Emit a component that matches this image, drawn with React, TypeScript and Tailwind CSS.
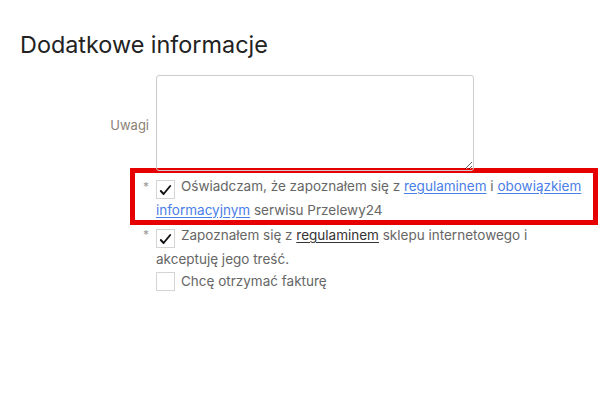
import React from "react";

function Check() {
  return (
    <svg width="13" height="12" viewBox="0 0 13 12" className="block mt-[2px]">
      <path d="M1.8 7 L4.6 10 L11.2 2" fill="none" stroke="#111" strokeWidth="1.9" strokeLinecap="round" strokeLinejoin="round" />
    </svg>
  );
}

function Box({ checked }: { checked?: boolean }) {
  return (
    <span className="inline-flex items-center justify-center w-[19px] h-[19px] border border-[#d4d4d4] bg-white align-[-5px] mr-[6px]">
      {checked ? <Check /> : null}
    </span>
  );
}

export default function App() {
  return (
    <div className="w-[609px] h-[396px] bg-white overflow-hidden" style={{ fontFamily: "Inter, 'Noto Sans', sans-serif" }}>
      <h1 className="pl-[20px] pt-[29px] text-[23.4px] leading-[32px] text-[#222] font-normal">Dodatkowe informacje</h1>
      <div className="flex items-center mt-[14px]">
        <div className="w-[149px] text-right text-[13px] text-[#8a7f76] pt-[6px]">Uwagi</div>
        <textarea className="ml-[7px] w-[318px] h-[96px] border border-[#cccccc] rounded-[3px] outline-none block" />
      </div>
      <div className="ml-[130px] w-[468px] h-[57px] border-[5px] border-[#e60000] -mt-[3px] flex text-[13.5px] leading-[22px] text-[#666]">
        <span className="w-[21px] pl-[8px] pt-[3px] text-[#999] text-[12px]">*</span>
        <div className="w-[436px] mt-[2px]">
          <Box checked />
          Oświadczam, że zapoznałem się z{" "}
          <a className="text-[#4a80e8] underline underline-offset-2">regulaminem</a> i{" "}
          <a className="text-[#4a80e8] underline underline-offset-2">obowiązkiem informacyjnym</a> serwisu Przelewy24
        </div>
      </div>
      <div className="ml-[130px] flex text-[13.5px] leading-[22px] text-[#666] -mt-[1px]">
        <span className="w-[26px] pl-[13px] text-[#999] text-[12px]">*</span>
        <div className="w-[420px]">
          <Box checked />
          Zapoznałem się z <span className="text-[#333] underline underline-offset-2">regulaminem</span> sklepu internetowego i akceptuję jego treść.
        </div>
      </div>
      <div className="ml-[156px] text-[13.5px] leading-[22px] text-[#666] mt-[0px]">
        <Box />
        Chcę otrzymać fakturę
      </div>
    </div>
  );
}
